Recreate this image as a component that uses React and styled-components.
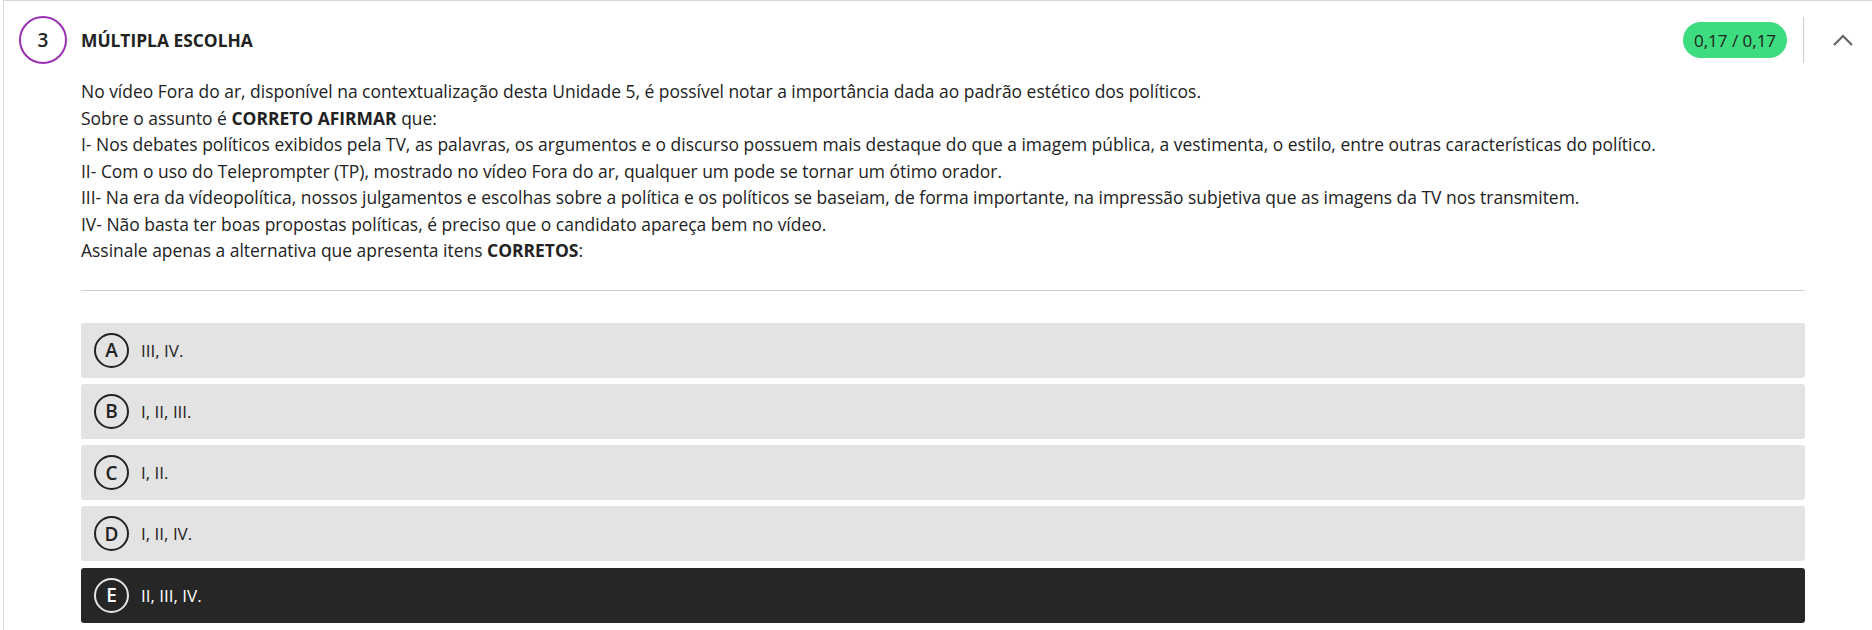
import React from "react";
import styled, { createGlobalStyle } from "styled-components";

const GlobalStyle = createGlobalStyle`
  html, body {
    margin: 0;
    padding: 0;
    background: #fff;
    overflow: hidden;
  }
  body {
    font-family: "Open Sans", "Noto Sans", sans-serif;
    color: #222;
  }
`;

const Page = styled.div`
  padding-left: 3px;
`;

const Card = styled.section`
  border: 1px solid #d6d6d6;
  border-right: none;
  border-bottom: none;
  padding: 15px 0 0 15px;
  min-height: 640px;
`;

const Header = styled.header`
  display: flex;
  align-items: center;
  height: 48px;
  padding-right: 18px;
`;

const NumberBadge = styled.div`
  width: 44px;
  height: 44px;
  border: 2px solid #9b30b5;
  border-radius: 50%;
  display: flex;
  align-items: center;
  justify-content: center;
  font-size: 19px;
  font-weight: 600;
  color: #222;
  flex-shrink: 0;
`;

const Title = styled.h2`
  margin: 0 0 0 14px;
  font-size: 17.4px;
  font-weight: 700;
  color: #222;
  flex: 1;
`;

const Score = styled.div`
  background: #3ddc7e;
  border-radius: 18px;
  height: 36px;
  width: 104px;
  display: flex;
  align-items: center;
  justify-content: center;
  font-size: 17px;
  font-weight: 500;
  color: #222;
`;

const Separator = styled.div`
  width: 1px;
  height: 46px;
  background: #ccc;
  margin-left: 16px;
`;

const Toggle = styled.button`
  border: none;
  background: none;
  padding: 0;
  margin-left: 28px;
  width: 22px;
  height: 16px;
  display: flex;
  align-items: center;
  justify-content: center;
  cursor: pointer;
`;

const Body = styled.div`
  margin-left: 62px;
  width: 1724px;
`;

const Statement = styled.div`
  margin-top: 14px;
  font-size: 17.45px;
  line-height: 26.5px;
  color: #222;

  p {
    margin: 0;
  }
  strong {
    font-weight: 700;
  }
`;

const Divider = styled.hr`
  border: none;
  border-top: 1px solid #cfcfcf;
  margin: 26px 0 32px;
`;

const Options = styled.div`
  display: flex;
  flex-direction: column;
  gap: 6.25px;
`;

const Option = styled.div`
  display: flex;
  align-items: center;
  height: 55px;
  padding-left: 13px;
  border-radius: 3px;
  background: ${(p) => (p.$selected ? "#262626" : "#e3e3e3")};
  color: ${(p) => (p.$selected ? "#fff" : "#222")};
`;

const Letter = styled.span`
  width: 31px;
  height: 31px;
  border-radius: 50%;
  border: 2px solid ${(p) => (p.$selected ? "#e6e6e6" : "#222")};
  display: flex;
  align-items: center;
  justify-content: center;
  font-size: 19px;
  font-weight: 600;
  flex-shrink: 0;
`;

const Label = styled.span`
  margin-left: 12px;
  font-size: 17px;
  font-weight: ${(p) => (p.$selected ? 500 : 400)};
`;

const options = [
  { letter: "A", text: "III, IV." },
  { letter: "B", text: "I, II, III." },
  { letter: "C", text: "I, II." },
  { letter: "D", text: "I, II, IV." },
  { letter: "E", text: "II, III, IV.", selected: true },
];

const ChevronUp = () => (
  <svg width="22" height="14" viewBox="0 0 22 14">
    <path d="M2 12 L11 3 L20 12" fill="none" stroke="#666" strokeWidth="2.2" />
  </svg>
);

export default function App() {
  return (
    <Page>
      <GlobalStyle />
      <Card>
        <Header>
          <NumberBadge>3</NumberBadge>
          <Title>MÚLTIPLA ESCOLHA</Title>
          <Score>0,17 / 0,17</Score>
          <Separator />
          <Toggle aria-label="Recolher">
            <ChevronUp />
          </Toggle>
        </Header>
        <Body>
          <Statement>
            <p>
              No vídeo Fora do ar, disponível na contextualização desta Unidade 5, é possível notar a importância dada ao padrão estético dos políticos.
            </p>
            <p>
              Sobre o assunto é <strong>CORRETO AFIRMAR</strong> que:
            </p>
            <p>
              I- Nos debates políticos exibidos pela TV, as palavras, os argumentos e o discurso possuem mais destaque do que a imagem pública, a vestimenta, o estilo, entre outras características do político.
            </p>
            <p>
              II- Com o uso do Teleprompter (TP), mostrado no vídeo Fora do ar, qualquer um pode se tornar um ótimo orador.
            </p>
            <p>
              III- Na era da vídeopolítica, nossos julgamentos e escolhas sobre a política e os políticos se baseiam, de forma importante, na impressão subjetiva que as imagens da TV nos transmitem.
            </p>
            <p>IV- Não basta ter boas propostas políticas, é preciso que o candidato apareça bem no vídeo.</p>
            <p>
              Assinale apenas a alternativa que apresenta itens <strong>CORRETOS</strong>:
            </p>
          </Statement>
          <Divider />
          <Options>
            {options.map((o) => (
              <Option key={o.letter} $selected={o.selected}>
                <Letter $selected={o.selected}>{o.letter}</Letter>
                <Label $selected={o.selected}>{o.text}</Label>
              </Option>
            ))}
          </Options>
        </Body>
      </Card>
    </Page>
  );
}
